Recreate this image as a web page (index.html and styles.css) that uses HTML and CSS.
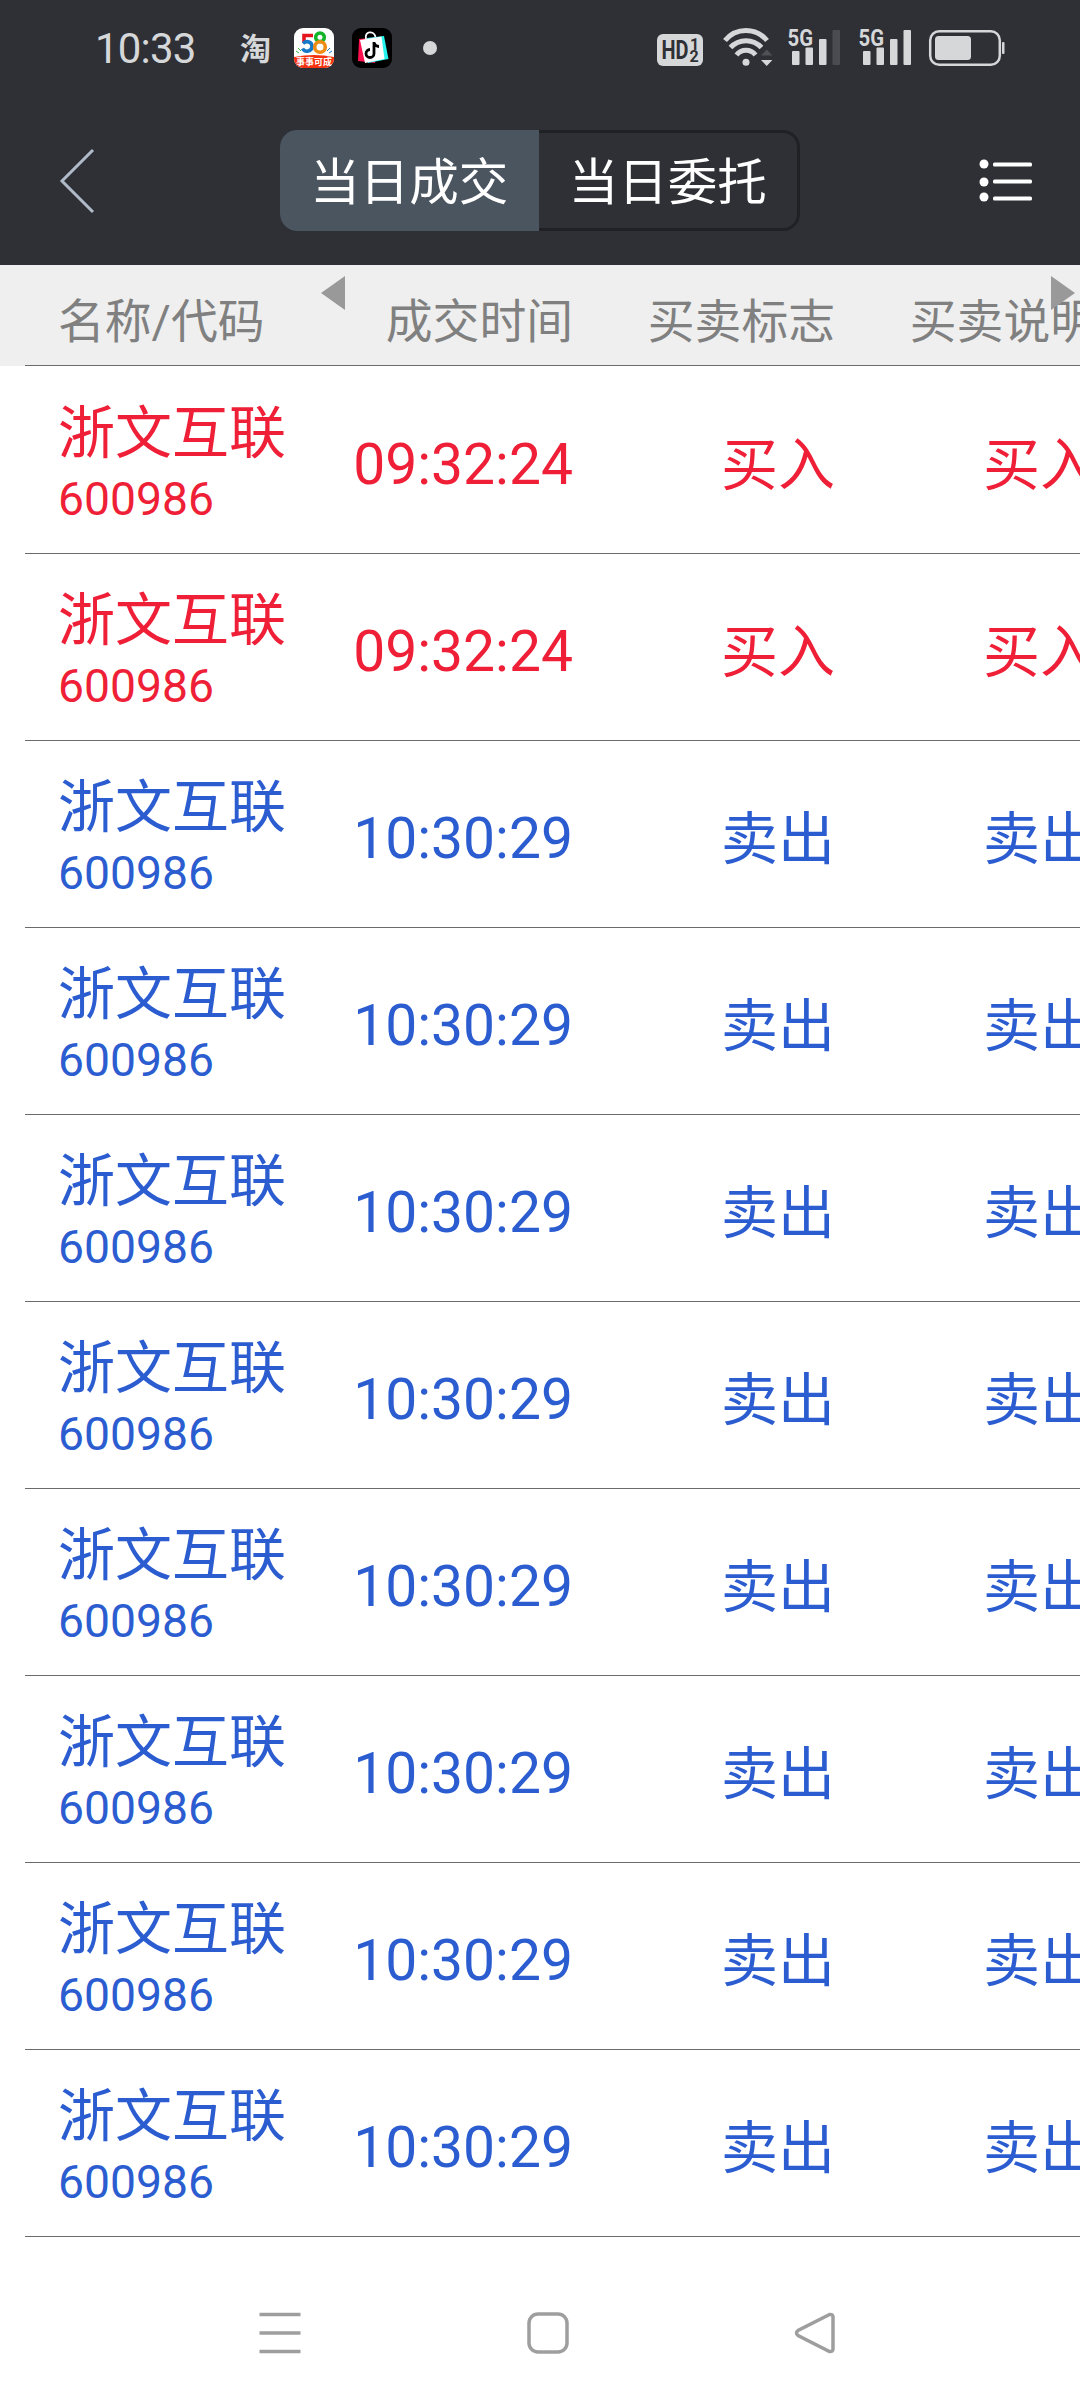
FILE: index.html
```
<!DOCTYPE html>
<html lang="zh-CN">
<head>
<meta charset="UTF-8">
<title>当日成交</title>
<link rel="stylesheet" href="styles.css">
</head>
<body>

<!-- status bar -->
<div class="status">
  <span class="clock">10:33</span>
  <span class="tao">淘</span>
  <svg class="app" viewBox="0 0 40 40">
    <defs>
      <clipPath id="round"><rect width="40" height="40" rx="9"/></clipPath>
    </defs>
    <g clip-path="url(#round)">
      <rect width="40" height="40" fill="#fff"/>
      <g fill="none" stroke-width="3.6">
        <path d="M19 7.5H10V15" stroke="#e6141e"/>
        <path d="M9 15.5C13 12 18 14 18 18.300C18 23.500 11 25 8.500 20.500" stroke="#1778c8"/>
        <circle cx="26" cy="9.300" r="4.300" stroke="#14b428"/>
        <circle cx="26" cy="19" r="5.300" stroke="#f08c14"/>
      </g>
      <path d="M4 20l3 3M2 23l3 2" stroke="#39b54a" stroke-width="1"/>
      <path d="M36 20l-3 3M38 23l-3 2" stroke="#1778c8" stroke-width="1"/>
      <path d="M0 29Q20 25 40 29V40H0z" fill="#f5320f"/>
      <text class="tiny" x="20" y="37" text-anchor="middle">事事可成</text>
    </g>
  </svg>
  <svg class="app" viewBox="0 0 40 40">
    <rect width="40" height="40" rx="9"/>
    <path d="M7 11L27 9L23 35L6 33z" fill="#ff1150"/>
    <path d="M15 10L32 8L36.500 31L16 35z" fill="#25f4ee"/>
    <path d="M8 12L29.500 8.500L32.500 31L13 35z" fill="#fff"/>
    <path d="M14 11C12 3 22 2 23.500 9" fill="none" stroke="#fff" stroke-width="1.800"/>
    <path d="M22 14V25.500A4 4 0 1 1 18 21.500M22 15Q23.500 18.500 27 18.500" fill="none" stroke="#000" stroke-width="2.800"/>
  </svg>
  <span class="dot"></span>

  <svg class="signals" viewBox="0 0 350 42" fill="#d6d7d9">
    <!-- HD -->
    <rect x="1" y="7" width="46" height="32" rx="6"/>
    <text class="hd" x="5.500" y="32" textLength="27" lengthAdjust="spacingAndGlyphs">HD</text>
    <text class="num" x="34" y="22.500">1</text>
    <text class="num" x="33.500" y="35">2</text>
    <!-- wifi -->
    <g fill="none" stroke="#d6d7d9" stroke-width="5">
      <path d="M69 13.500A27 27 0 0 1 111 13.500"/>
      <path d="M74.500 20.500A21 21 0 0 1 105.500 20.500"/>
      <path d="M80.500 28A12 12 0 0 1 99.500 28"/>
    </g>
    <circle cx="90" cy="35.300" r="3.500"/>
    <path d="M105 28.500l5.700-6 5.700 6z" fill="#505156"/>
    <path d="M105 33l5.700 6 5.700-6z"/>
    <!-- sim 1 -->
    <text class="net" x="131.500" y="18.500" textLength="25.500" lengthAdjust="spacingAndGlyphs">5G</text>
    <rect x="136" y="24" width="7.500" height="14" rx="1"/>
    <rect x="149.500" y="20.500" width="7.500" height="17.500" rx="1"/>
    <rect x="163" y="12" width="7.500" height="26" rx="1"/>
    <rect x="176.500" y="3" width="7.500" height="35" rx="1" fill="#4b4c51"/>
    <!-- sim 2 -->
    <text class="net" x="202.500" y="18.500" textLength="25.500" lengthAdjust="spacingAndGlyphs">5G</text>
    <rect x="207" y="24" width="7.500" height="14" rx="1"/>
    <rect x="220.500" y="20.500" width="7.500" height="17.500" rx="1"/>
    <rect x="234" y="12" width="7.500" height="26" rx="1"/>
    <rect x="247.500" y="3" width="7.500" height="35" rx="1"/>
    <!-- battery -->
    <rect x="274.200" y="4.200" width="69.600" height="33.600" rx="9" fill="none" stroke="#d6d7d9" stroke-width="2.500"/>
    <rect x="279" y="9" width="36" height="24" rx="3.500"/>
    <rect x="346" y="15" width="2.500" height="12" rx="1"/>
  </svg>
</div>

<!-- title bar -->
<header class="topbar">
  <svg class="back" viewBox="0 0 36 66">
    <path d="M34 2L3 33L34 64" fill="none" stroke="#b0bac8" stroke-width="3"/>
  </svg>
  <div class="tabs">
    <span class="tab active">当日成交</span>
    <span class="tab">当日委托</span>
  </div>
  <svg class="list" viewBox="0 0 54 46" fill="#fff">
    <circle cx="5" cy="6" r="4.500"/>
    <circle cx="5" cy="24" r="4.500"/>
    <circle cx="5" cy="39" r="4.500"/>
    <rect x="14" y="4.500" width="39" height="4" rx="1.500"/>
    <rect x="14" y="21.500" width="39" height="4" rx="1.500"/>
    <rect x="14" y="38.500" width="39" height="4" rx="1.500"/>
  </svg>
</header>

<!-- column titles -->
<div class="cols">
  <span class="first">名称/代码</span>
  <span>成交时间</span>
  <span>买卖标志</span>
  <span>买卖说明</span>
  <svg class="arrow left" viewBox="0 0 24 34"><path d="M24 0V34L0 17z" fill="#999"/></svg>
  <svg class="arrow right" viewBox="0 0 24 34"><path d="M0 0V34L24 17z" fill="#999"/></svg>
</div>

<!-- deals -->
<ul class="deals">
  <li class="buy"><div class="stock"><b>浙文互联</b><i>600986</i></div><span class="time">09:32:24</span><span>买入</span><span>买入</span></li>
  <li class="buy"><div class="stock"><b>浙文互联</b><i>600986</i></div><span class="time">09:32:24</span><span>买入</span><span>买入</span></li>
  <li class="sell"><div class="stock"><b>浙文互联</b><i>600986</i></div><span class="time">10:30:29</span><span>卖出</span><span>卖出</span></li>
  <li class="sell"><div class="stock"><b>浙文互联</b><i>600986</i></div><span class="time">10:30:29</span><span>卖出</span><span>卖出</span></li>
  <li class="sell"><div class="stock"><b>浙文互联</b><i>600986</i></div><span class="time">10:30:29</span><span>卖出</span><span>卖出</span></li>
  <li class="sell"><div class="stock"><b>浙文互联</b><i>600986</i></div><span class="time">10:30:29</span><span>卖出</span><span>卖出</span></li>
  <li class="sell"><div class="stock"><b>浙文互联</b><i>600986</i></div><span class="time">10:30:29</span><span>卖出</span><span>卖出</span></li>
  <li class="sell"><div class="stock"><b>浙文互联</b><i>600986</i></div><span class="time">10:30:29</span><span>卖出</span><span>卖出</span></li>
  <li class="sell"><div class="stock"><b>浙文互联</b><i>600986</i></div><span class="time">10:30:29</span><span>卖出</span><span>卖出</span></li>
  <li class="sell"><div class="stock"><b>浙文互联</b><i>600986</i></div><span class="time">10:30:29</span><span>卖出</span><span>卖出</span></li>
</ul>

<!-- system navigation -->
<nav class="sysnav">
  <svg viewBox="0 0 42 42"><path d="M.5 2.500H41.500M.5 21H41.500M.5 39.500H41.500"/></svg>
  <svg viewBox="0 0 42 42"><rect x="2" y="2" width="38" height="38" rx="9"/></svg>
  <svg viewBox="0 0 42 42"><path d="M35.500 2.500L4 18.500Q1 21 4 23.500L35.500 39.500Q39 40 39 37V5Q39 2 35.500 2.500z"/></svg>
</nav>

</body>
</html>
```
FILE: styles.css
```
:root{
  --bar: #2f3035;
  --line: #6b6b6b;
  --buy: #ee1f36;
  --sell: #2b5dd1;
}
*{ box-sizing:border-box; }

body{
  margin:0;
  width:1080px;
  height:2408px;
  overflow:hidden;
  background:#fff;
  font-family: Roboto, "Noto Sans CJK SC", sans-serif;
}
svg{ display:block; flex:none; }

/* status bar */
.status{
  display:flex;
  align-items:center;
  height:119px;
  padding:0 74px 23px 95px;
  background:var(--bar);
  color:#d6d7d9;
}
.clock{
  width:145px;
  font-size:42px;
  letter-spacing:-.8px;
}
.tao{
  width:54px;
  padding-top:3px;
  font-size:31px;
  font-weight:700;
  line-height:40px;
}
.app{
  width:40px;
  height:40px;
  margin-right:18px;
}
.tiny{ font-size:9px; font-weight:700; fill:#fff; }
.dot{
  width:14px; height:14px;
  margin-left:13px;
  border-radius:50%;
  background:#d6d7d9;
}
.signals{
  width:350px;
  height:42px;
  margin-left:auto;
}
.hd{ font-size:26px; font-weight:700; fill:var(--bar); }
.num{ font-size:16px; font-weight:700; fill:var(--bar); }
.net{ font-size:24px; font-weight:700; }

/* title bar */
.topbar{
  display:flex;
  align-items:flex-start;
  height:146px;
  padding:11px 47px 0 59px;
  background:var(--bar);
}
.back{ width:36px; height:66px; margin-top:18px; }
.list{ width:54px; height:46px; margin:28px 0 0 auto; }
.tabs{
  display:flex;
  width:520px;
  height:101px;
  margin-left:185px;
  border:3px solid #202125;
  border-radius:17px;
}
.tab{
  flex:1;
  color:#fff;
  font-size:49.5px;
  line-height:101px;
  text-align:center;
}
.tab.active{
  margin:-3px 0 -3px -3px;
  border-radius:17px 0 0 17px;
  background:#4a5560;
  line-height:107px;
}

/* table */
.cols,
.deals li{
  display:grid;
  grid-template-columns:253px 262px 262px 262px;
  align-items:center;
  text-align:right;
}
.cols{
  position:relative;
  height:101px;
  padding:3px 0 0 58px;
  background:#eeefee;
  color:#808080;
  font-size:46.8px;
  overflow:hidden;
}
.cols .first{ text-align:left; white-space:nowrap; }
.arrow{
  position:absolute;
  top:11px;
  width:24px;
  height:34px;
}
.arrow.left{ left:321px; }
.arrow.right{ left:1051px; }

.deals{
  position:relative;
  margin:-1px 0 0 25px;
  padding:0;
  list-style:none;
  border-top:1px solid var(--line);
}
.deals li{
  height:187px;
  padding-left:33px;
  border-bottom:1px solid var(--line);
  font-size:57px;
}
.deals li:first-child{ height:188px; }
.buy{ color:var(--buy); }
.sell{ color:var(--sell); }
.stock{
  display:flex;
  flex-direction:column;
  padding-top:8px;
  text-align:left;
}
.stock b{ font-weight:400; line-height:70px; }
.stock i{ font-style:normal; font-size:46.3px; line-height:60px; }
.time{ padding-top:9px; }

/* system navigation */
.sysnav{
  display:flex;
  justify-content:space-between;
  padding:75px 244px 0 259px;
}
.sysnav svg{
  width:42px;
  height:42px;
  fill:none;
  stroke:#9e9e9e;
  stroke-width:3.5;
}
```
